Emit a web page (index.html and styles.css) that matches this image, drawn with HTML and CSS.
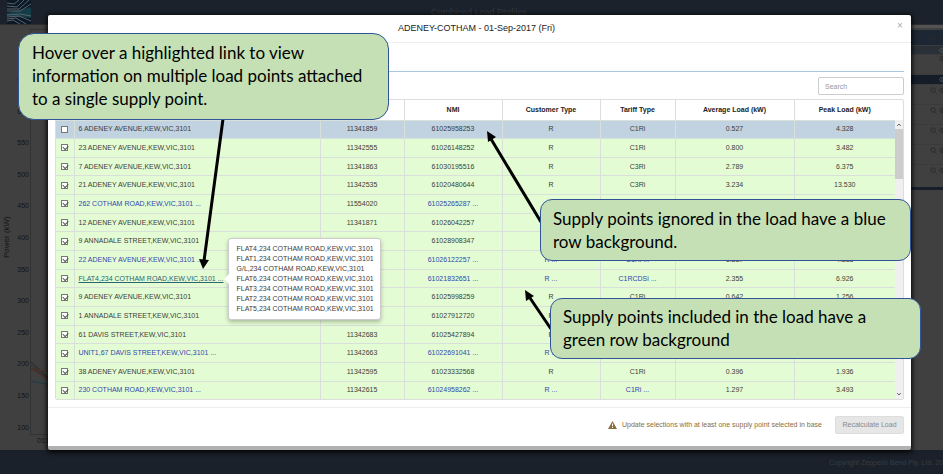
FILE: index.html
```html
<!DOCTYPE html>
<html lang="en">
<head>
<meta charset="utf-8">
<title>Combined Load Profiles</title>
<link rel="stylesheet" href="styles.css">
</head>
<body>
<div class="app">
  <header class="topbar">
    <svg class="logo" viewBox="0 0 24 24" preserveAspectRatio="none" aria-hidden="true">
      <rect width="24" height="24" fill="#0b1825"/>
      <path d="M0 13 24 7v11L0 16z" fill="#143d48"/>
      <g fill="none" stroke="#59636b" stroke-width="1">
        <path d="M0 3l7 1 5-4M0 6l10 1 7-7M0 9l12 0 10-9M0 11l13 0 11-7M0 15l13-1 11 2M0 17l12-1 12 5M0 19l9-1 10 6M0 21l6-1 7 4"/>
      </g>
    </svg>
    <h1 class="app-title">Combined Load Profiles</h1>
  </header>
  <main class="workspace">
    <section class="chart">
      <div class="axis-title">Power (kW)</div>
      <ol class="ticks">
        <li>700</li><li>650</li><li>600</li><li>550</li><li>500</li><li>450</li><li>400</li><li>350</li><li>300</li><li>250</li><li>200</li><li>150</li><li>100</li>
      </ol>
      <div class="plot">
        <svg class="lines" viewBox="0 0 20 80" aria-hidden="true">
          <g fill="none" stroke-width="1">
            <path d="M0 8 20 26" stroke="#28251f"/><path d="M0 11 20 27" stroke="#1d3a32"/>
            <path d="M0 14 20 27" stroke="#552018"/><path d="M0 15 20 18" stroke="#4c3026"/>
            <path d="M0 27 20 31" stroke="#1b3c4c"/>
          </g>
        </svg>
        <span class="x-tick">01:00</span>
      </div>
    </section>
    <aside class="side">
      <div class="side-row side-head"><svg class="ico" viewBox="0 0 8 8"><path d="M1 1v6h6z"/></svg><svg class="ico"><use href="#eye"/></svg></div>
      <div class="side-row side-sub"><svg class="ico"><use href="#eye"/></svg></div>
      <div class="side-row side-tall"><svg class="ico"><use href="#eye"/></svg></div>
      <div class="side-row side-sel"><svg class="ico"><use href="#eye"/></svg></div>
      <div class="side-row side-item"><svg class="ico"><use href="#lens"/></svg><svg class="ico"><use href="#eye"/></svg></div>
      <div class="side-row side-item"><svg class="ico"><use href="#lens"/></svg><svg class="ico"><use href="#eye"/></svg></div>
      <div class="side-row side-item"><svg class="ico"><use href="#lens"/></svg><svg class="ico"><use href="#eye"/></svg></div>
      <div class="side-row side-item"><svg class="ico"><use href="#lens"/></svg><svg class="ico"><use href="#eye"/></svg></div>
      <div class="side-row side-item"><svg class="ico"><use href="#lens"/></svg><svg class="ico"><use href="#eye"/></svg></div>
    </aside>
  </main>
  <footer class="bottombar">Copyright Zeppelin Bend Pty. Ltd. 20</footer>
</div>

<svg class="defs" aria-hidden="true">
  <symbol id="eye" viewBox="0 0 8 8"><path d="M0 4Q4-1 8 4 4 9 0 4z"/><circle cx="4" cy="4" r="1"/></symbol>
  <symbol id="lens" viewBox="0 0 8 8"><circle cx="3.5" cy="3.5" r="2.5"/><path d="M5.5 5.5 7.5 7.5"/></symbol>
</svg>

<div class="overlay">
  <div class="modal" role="dialog" aria-labelledby="modal-title">
    <div class="modal-head">
      <h2 id="modal-title">ADENEY-COTHAM - 01-Sep-2017 (Fri)</h2>
      <button class="close" type="button" aria-label="Close">×</button>
    </div>
    <div class="modal-body">
      <div class="tabs"></div>
      <input class="search" type="search" placeholder="Search" aria-label="Search">
      <div class="table-box">
        <table>
          <colgroup><col class="c-check"><col><col class="c-id"><col class="c-nmi"><col class="c-nmi"><col class="c-tariff"><col class="c-avg"><col class="c-peak"></colgroup>
          <thead><tr><th></th><th></th><th></th><th>NMI</th><th>Customer Type</th><th>Tariff Type</th><th>Average Load (kW)</th><th>Peak Load (kW)</th></tr></thead>
          <tbody>
            <tr class="ignored"><td><input type="checkbox" aria-label="6 ADENEY AVENUE"></td><td>6 ADENEY AVENUE,KEW,VIC,3101</td><td>11341859</td><td>61025958253</td><td>R</td><td>C1Ri</td><td>0.527</td><td>4.328</td></tr>
            <tr><td><input type="checkbox" checked aria-label="23 ADENEY AVENUE"></td><td>23 ADENEY AVENUE,KEW,VIC,3101</td><td>11342555</td><td>61026148252</td><td>R</td><td>C1Ri</td><td>0.800</td><td>3.482</td></tr>
            <tr><td><input type="checkbox" checked aria-label="7 ADENEY AVENUE"></td><td>7 ADENEY AVENUE,KEW,VIC,3101</td><td>11341863</td><td>61030195516</td><td>R</td><td>C3Ri</td><td>2.789</td><td>6.375</td></tr>
            <tr><td><input type="checkbox" checked aria-label="21 ADENEY AVENUE"></td><td>21 ADENEY AVENUE,KEW,VIC,3101</td><td>11342535</td><td>61020480644</td><td>R</td><td>C3Ri</td><td>3.234</td><td>13.530</td></tr>
            <tr><td><input type="checkbox" checked aria-label="262 COTHAM ROAD"></td><td><a href="#">262 COTHAM ROAD,KEW,VIC,3101 ...</a></td><td>11554020</td><td><a href="#">61025265287 ...</a></td><td></td><td></td><td></td><td></td></tr>
            <tr><td><input type="checkbox" checked aria-label="12 ADENEY AVENUE"></td><td>12 ADENEY AVENUE,KEW,VIC,3101</td><td>11341871</td><td>61026042257</td><td></td><td></td><td></td><td></td></tr>
            <tr><td><input type="checkbox" checked aria-label="9 ANNADALE STREET"></td><td>9 ANNADALE STREET,KEW,VIC,3101</td><td></td><td>61028908347</td><td></td><td></td><td></td><td></td></tr>
            <tr><td><input type="checkbox" checked aria-label="22 ADENEY AVENUE"></td><td><a href="#">22 ADENEY AVENUE,KEW,VIC,3101 ...</a></td><td></td><td><a href="#">61026122257 ...</a></td><td><a href="#">R ...</a></td><td><a href="#">C1Ri ...</a></td><td>1.887</td><td>4.888</td></tr>
            <tr><td><input type="checkbox" checked aria-label="FLAT4,234 COTHAM ROAD"></td><td class="has-tip"><a class="hovered" href="#" aria-describedby="tip">FLAT4,234 COTHAM ROAD,KEW,VIC,3101 ...</a>
              <div class="tip" id="tip" role="tooltip">FLAT4,234 COTHAM ROAD,KEW,VIC,3101<br>FLAT1,234 COTHAM ROAD,KEW,VIC,3101<br>G/L,234 COTHAM ROAD,KEW,VIC,3101<br>FLAT6,234 COTHAM ROAD,KEW,VIC,3101<br>FLAT3,234 COTHAM ROAD,KEW,VIC,3101<br>FLAT2,234 COTHAM ROAD,KEW,VIC,3101<br>FLAT5,234 COTHAM ROAD,KEW,VIC,3101</div></td><td></td><td><a href="#">61021832651 ...</a></td><td><a href="#">R ...</a></td><td><a href="#">C1RCDSi ...</a></td><td>2.355</td><td>6.926</td></tr>
            <tr><td><input type="checkbox" checked aria-label="9 ADENEY AVENUE"></td><td>9 ADENEY AVENUE,KEW,VIC,3101</td><td></td><td>61025998259</td><td>R</td><td>C1Ri</td><td>0.642</td><td>1.256</td></tr>
            <tr><td><input type="checkbox" checked aria-label="1 ANNADALE STREET"></td><td>1 ANNADALE STREET,KEW,VIC,3101</td><td></td><td>61027912720</td><td>R</td><td></td><td></td><td></td></tr>
            <tr><td><input type="checkbox" checked aria-label="61 DAVIS STREET"></td><td>61 DAVIS STREET,KEW,VIC,3101</td><td>11342683</td><td>61025427894</td><td>R</td><td></td><td></td><td></td></tr>
            <tr><td><input type="checkbox" checked aria-label="UNIT1,67 DAVIS STREET"></td><td><a href="#">UNIT1,67 DAVIS STREET,KEW,VIC,3101 ...</a></td><td>11342663</td><td><a href="#">61022691041 ...</a></td><td><a href="#">R ...</a></td><td></td><td></td><td></td></tr>
            <tr><td><input type="checkbox" checked aria-label="38 ADENEY AVENUE"></td><td>38 ADENEY AVENUE,KEW,VIC,3101</td><td>11342595</td><td>61023332568</td><td>R</td><td>C1Ri</td><td>0.396</td><td>1.936</td></tr>
            <tr><td><input type="checkbox" checked aria-label="230 COTHAM ROAD"></td><td><a href="#">230 COTHAM ROAD,KEW,VIC,3101 ...</a></td><td>11342615</td><td><a href="#">61024958262 ...</a></td><td><a href="#">R ...</a></td><td><a href="#">C1Ri ...</a></td><td>1.297</td><td>3.493</td></tr>
          </tbody>
        </table>
        <div class="scrollbar" aria-hidden="true">
          <svg viewBox="0 0 9 9"><path d="M2.500 6 4.500 4 6.500 6"/></svg>
          <div class="thumb"></div>
          <svg class="down" viewBox="0 0 9 9"><path d="M2.500 3 4.500 5 6.500 3"/></svg>
        </div>
      </div>
    </div>
    <div class="modal-foot">
      <svg class="warn" viewBox="0 0 9 8" aria-hidden="true"><path d="M4.500 0 9 8H0z" fill="#8a6d3b"/><path d="M4.500 2.600v2.700M4.500 6v1" stroke="#fff" stroke-width="1"/></svg>
      <span class="warn-text">Update selections with at least one supply point selected in base</span>
      <button class="recalc" type="button" disabled>Recalculate Load</button>
    </div>
  </div>
</div>

<svg class="arrows" viewBox="0 0 943 474" aria-hidden="true">
  <g stroke="#000" stroke-width="3"><path d="M223 119 204 261M541 222 491 139M551 329 530 298"/></g>
  <path d="M203 269 199 259 209 260zM487 131 496 137 488 142zM525 290 534 296 526 301z"/>
</svg>
<div class="callout callout-hover">Hover over a highlighted link to view<br>information on multiple load points attached<br>to a single supply point.</div>
<div class="callout callout-ignored">Supply points ignored in the load have a blue<br>row background.</div>
<div class="callout callout-included">Supply points included in the load have a<br>green row background</div>
</body>
</html>
```
FILE: styles.css
```css
* { box-sizing: border-box; }
body {
  margin: 0;
  font-family: "Liberation Sans", Arial, sans-serif;
  font-size: 7px;
  color: #3c3c3c;
  background: #404040;
  overflow: hidden;
}
h1, h2, ol { margin: 0; padding: 0; font-weight: normal; }
a { color: #3346b0; text-decoration: none; }
button, input { font-family: inherit; margin: 0; }
.defs { position: absolute; width: 0; height: 0; }

/* Page behind the dialog */
.app { display: flex; flex-direction: column; height: 100vh; }
.topbar {
  display: flex;
  height: 25px;
  padding: 0 16px 0 7px;
  background: #1b222b;
  border-bottom: 1px solid #2b2d30;
}
.logo { width: 24px; height: 24px; }
.app-title { flex: 1; padding-top: 6px; text-align: center; font-size: 9px; line-height: 12px; color: #34393f; }
.workspace { flex: 1; display: flex; justify-content: space-between; }
.chart { display: flex; padding-top: 7px; color: #141414; }
.axis-title {
  width: 14px;
  writing-mode: vertical-rl;
  transform: rotate(180deg);
  text-align: center;
  line-height: 14px;
  font-size: 8px;
  padding-top: 8px;
}
.ticks {
  display: grid;
  grid-auto-rows: 1fr;
  align-items: center;
  width: 15px;
  height: 411px;
  text-align: right;
  list-style: none;
  font-size: 7px;
}
.plot {
  position: relative;
  display: flex;
  flex-direction: column;
  justify-content: flex-end;
  width: 20px;
  height: 406px;
  margin: -3px 0 0 1px;
  border: solid #333;
  border-width: 1px 0 1px 1px;
}
.lines { width: 20px; height: 80px; }
.x-tick { position: absolute; top: 100%; left: 6px; padding-top: 2px; line-height: 9px; }
.side { width: 34px; border-top: 3px solid #535353; padding-top: 2px; }
.side-row {
  display: flex;
  justify-content: flex-end;
  align-items: center;
  gap: 2px;
  height: 20px;
  border-bottom: 1px solid #3b3b3b;
}
.side-row .ico { width: 7px; height: 7px; flex: none; fill: none; stroke: #292929; stroke-width: 1; }
.side-row .ico:last-child { margin-right: -3px; }
.side-head { height: 16px; background: #1c2733; }
.side-sub { height: 9px; background: #2a3038; }
.side-tall { height: 20px; align-items: flex-start; }
.side-sel { height: 10px; background: #141d28; }
.side-item { align-items: flex-start; padding-top: 2px; }
.side-item:last-child { height: 25px; border-bottom: 3px solid #161f29; }
.side-sub .ico, .side-sel .ico { stroke: #555; }
.bottombar {
  flex: none;
  height: 24px;
  line-height: 26px;
  text-align: right;
  white-space: nowrap;
  background: #1a212a;
  color: #373d44;
}

/* Dialog */
.overlay { position: absolute; inset: 0; padding: 15px 32px 0 48px; }
.modal {
  background: #fff;
  border-bottom: 4px solid #b0b0b0;
  border-radius: 2px;
  box-shadow: 0 1px 5px 1px #000;
}
.modal-head { position: relative; height: 28px; border-bottom: 1px solid #eee; }
.modal-head h2 { text-align: center; font-size: 9px; line-height: 27px; padding-right: 6px; color: #222; }
.close {
  position: absolute;
  top: 5px;
  right: 6px;
  width: 10px;
  padding: 0;
  border: 0;
  background: none;
  font-size: 10px;
  line-height: 12px;
  color: #aaa;
}
.modal-body { padding: 0 7px 7px; }
.tabs { height: 29px; border-bottom: 1px solid #a6c9e2; }
.search {
  display: block;
  width: 86px;
  height: 18px;
  margin: 5px 0 4px auto;
  padding: 0 6px;
  border: 1px solid #ccc;
  border-radius: 2px;
  font-size: 7px;
  outline: 0;
}
.search::placeholder { color: #999; }
.table-box { position: relative; border: 1px solid #ddd; border-radius: 2px; }
table { width: calc(100% - 8px); height: 299px; table-layout: fixed; border-collapse: collapse; }
.c-check { width: 18px; }
.c-id { width: 84px; }
.c-nmi { width: 98px; }
.c-tariff { width: 75px; }
.c-avg { width: 119px; }
.c-peak { width: 101px; }
th, td { padding: 0; text-align: center; line-height: 10px; border-left: 1px solid #d9dfdb; }
th { height: 20px; font-size: 7px; color: #222; }
td { border-top: 1px solid #d9dfdb; }
th:first-child, td:first-child { border-left: 0; }
td:nth-child(2) { padding-left: 4px; text-align: left; }
tbody tr { background: #e4fcd3; }
tbody tr.ignored { background: #c1d2e1; }
input[type="checkbox"] {
  appearance: none;
  display: block;
  position: relative;
  width: 7px;
  height: 7px;
  margin: 0 auto;
  background: #fff;
  border: 1px solid #777;
}
input[type="checkbox"]:checked::after {
  content: "";
  position: absolute;
  left: 1px;
  top: 0;
  width: 4px;
  height: 3px;
  border: solid #555;
  border-width: 0 0 1px 1px;
  transform: rotate(-45deg);
}
.has-tip { position: relative; }
.hovered { color: #2a6473; text-decoration: underline; }
.tip {
  position: absolute;
  z-index: 2;
  top: 50%;
  left: 153px;
  transform: translateY(-50%);
  padding: 5px 7px 5px 8px;
  width: 153px;
  background: #fff;
  border: 1px solid #ccc;
  border-radius: 3px;
  box-shadow: 0 2px 4px #0004;
  line-height: 10px;
  white-space: nowrap;
}
.tip::before {
  content: "";
  position: absolute;
  top: 50%;
  left: -5px;
  border: solid transparent;
  border-width: 5px 5px 5px 0;
  border-right-color: #fff;
  transform: translateY(-50%);
}
.scrollbar {
  position: absolute;
  top: 20px;
  right: 0;
  bottom: 0;
  width: 8px;
  display: flex;
  flex-direction: column;
  background: #f0f0f0;
}
.scrollbar svg { width: 8px; height: 9px; fill: none; stroke: #444; stroke-width: 1; }
.thumb { height: 50px; background: #cdcdcd; }
.scrollbar .down { margin-top: auto; }
.modal-foot {
  display: flex;
  align-items: center;
  justify-content: flex-end;
  height: 39px;
  padding: 0 7px 5px 0;
  border-top: 1px solid #eee;
}
.warn { width: 9px; height: 8px; margin-right: 5px; }
.warn-text { color: #8a6d3b; margin-right: 13px; }
.recalc {
  height: 18px;
  width: 69px;
  padding: 0;
  border: 1px solid #ddd;
  border-radius: 2px;
  background: #e6e6e6;
  color: #888;
  font-size: 7px;
}

/* Annotations laid over the dialog */
.arrows { position: absolute; top: 0; left: 0; width: 943px; height: 474px; z-index: 3; }
.callout {
  position: absolute;
  z-index: 4;
  padding: 7px 12px;
  width: 371px;
  background: #c5e0b4;
  border: 1px solid #2f5597;
  border-radius: 12px;
  font-family: Lato, Carlito, sans-serif;
  font-size: 17px;
  line-height: 23px;
  color: #000;
  white-space: nowrap;
}
.callout-hover { top: 33px; left: 18px; height: 87px; padding-left: 13px; border-radius: 16px; }
.callout-ignored { top: 199px; left: 540px; height: 62px; }
.callout-included { top: 298px; left: 550px; height: 61px; padding-top: 6px; }
```
